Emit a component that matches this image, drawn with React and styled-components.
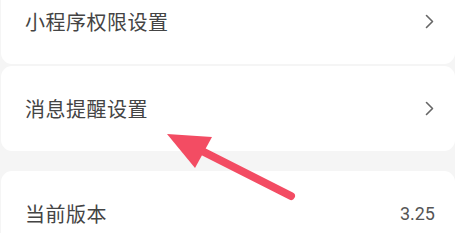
import React from 'react';
import styled, { createGlobalStyle } from 'styled-components';

const GlobalStyle = createGlobalStyle`
  html, body {
    margin: 0;
    padding: 0;
    background: #f5f5f5;
  }
  body {
    font-family: "Noto Sans CJK SC", "Noto Sans", sans-serif;
  }
`;

const Page = styled.div`
  position: relative;
  width: 455px;
  height: 233px;
  overflow: hidden;
  background: #f5f5f5;
`;

const List = styled.div`
  display: flex;
  flex-direction: column;
  margin-top: -21px;
  padding-left: 1px;
`;

const Card = styled.div`
  background: #fff;
  border-radius: 11px;
  margin-bottom: ${(p) => p.$gap}px;
`;

const Row = styled.div`
  height: 85px;
  display: flex;
  align-items: center;
  justify-content: space-between;
  padding: 0 20px 0 24px;
`;

const Label = styled.span`
  font-size: 20px;
  font-weight: 400;
  color: #444;
  letter-spacing: 0.5px;
`;

const Value = styled.span`
  font-family: "Roboto", "Noto Sans", sans-serif;
  font-size: 18px;
  color: #555;
`;

const Chevron = () => (
  <svg width="11" height="15" viewBox="0 0 11 15">
    <path d="M2.5 1.5 L8.5 7.5 L2.5 13.5" fill="none" stroke="#666" strokeWidth="1.6" strokeLinecap="round" strokeLinejoin="round" />
  </svg>
);

const Pointer = styled.svg`
  position: absolute;
  left: 0;
  top: 0;
  pointer-events: none;
`;

export default function App() {
  return (
    <Page>
      <GlobalStyle />
      <List>
        <Card $gap={2}>
          <Row>
            <Label>小程序权限设置</Label>
            <Chevron />
          </Row>
        </Card>
        <Card $gap={20}>
          <Row>
            <Label>消息提醒设置</Label>
            <Chevron />
          </Row>
        </Card>
        <Card $gap={0}>
          <Row>
            <Label>当前版本</Label>
            <Value>3.25</Value>
          </Row>
        </Card>
      </List>
      <Pointer width="455" height="233" viewBox="0 0 455 233">
        <line x1="200" y1="150" x2="291" y2="196" stroke="#f34c63" strokeWidth="8" strokeLinecap="round" />
        <polygon points="167,134 212,137 195,168" fill="#f34c63" />
      </Pointer>
    </Page>
  );
}
